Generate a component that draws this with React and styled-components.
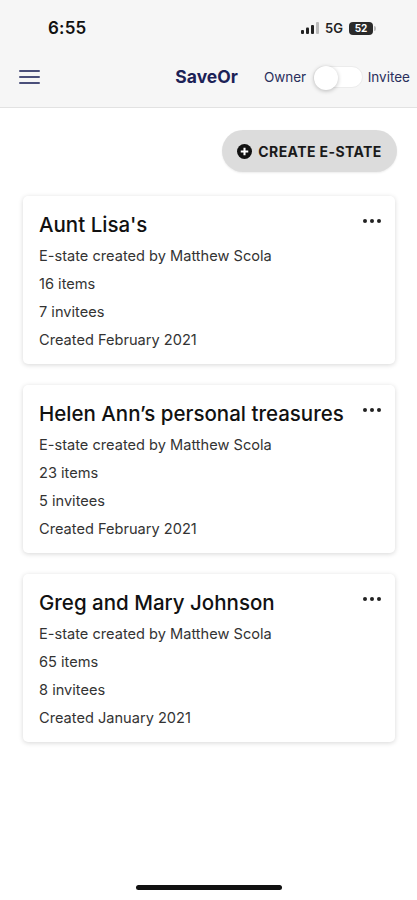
import React from 'react';
import styled, { createGlobalStyle } from 'styled-components';

const GlobalStyle = createGlobalStyle`
	html, body {
		margin: 0;
		padding: 0;
		background: #ffffff;
	}
	body {
		font-family: Inter, "Liberation Sans", Arial, sans-serif;
	}
`;

const Screen = styled.div`
	width: 417px;
	height: 900px;
	display: flex;
	flex-direction: column;
	background: #ffffff;
	position: relative;
	overflow: hidden;
`;

const Top = styled.div`
	background: #f6f6f6;
	border-bottom: 1px solid #e2e2e2;
	height: 108px;
	box-sizing: border-box;
`;

const StatusBar = styled.div`
	height: 56px;
	display: flex;
	align-items: center;
	justify-content: space-between;
	padding: 0 44px 0 48px;
	box-sizing: border-box;
`;

const Time = styled.span`
	font-size: 17px;
	font-weight: 600;
	color: #111;
	letter-spacing: 0.2px;
`;

const StatusRight = styled.div`
	display: flex;
	align-items: center;
	gap: 6px;
	font-size: 13px;
	font-weight: 600;
	color: #222;
`;

const Battery = styled.span`
	display: inline-flex;
	align-items: center;
	justify-content: center;
	width: 24px;
	height: 13px;
	border-radius: 4px;
	background: #2a2a2a;
	color: #fff;
	font-size: 10px;
	font-weight: 700;
	position: relative;
	&::after {
		content: '';
		position: absolute;
		right: -3px;
		top: 4px;
		width: 2px;
		height: 5px;
		border-radius: 0 2px 2px 0;
		background: #bbb;
	}
`;

const NavBar = styled.div`
	height: 41px;
	display: flex;
	align-items: center;
	padding: 0 7px 0 19px;
`;

const Menu = styled.div`
	width: 22px;
	display: flex;
	flex-direction: column;
	gap: 4px;
	& > span {
		height: 2px;
		background: #4a4f7a;
		border-radius: 1px;
	}
`;

const Brand = styled.div`
	margin-left: 135px;
	font-size: 17.5px;
	font-weight: 700;
	color: #1c2257;
`;

const ModeLabel = styled.span`
	font-size: 13.5px;
	color: #2a2f5c;
	margin: ${p => p.$left ? '0 7px 0 26px' : '0 0 0 5px'};
`;

const Toggle = styled.div`
	width: 51px;
	height: 22px;
	border-radius: 11px;
	background: #ffffff;
	border: 1px solid #ececec;
	box-sizing: border-box;
	position: relative;
`;

const Knob = styled.div`
	position: absolute;
	left: 0px;
	top: -1px;
	width: 24px;
	height: 24px;
	border-radius: 50%;
	background: #fff;
	box-shadow: 0 1px 4px rgba(0,0,0,0.25);
`;

const Content = styled.div`
	display: flex;
	flex-direction: column;
	padding: 22px 22px 0 23px;
`;

const CreateButton = styled.button`
	align-self: flex-end;
	display: flex;
	align-items: center;
	gap: 6px;
	height: 42px;
	margin-right: -2px;
	width: 175px;
	padding: 0;
	justify-content: center;
	border: none;
	border-radius: 21px;
	background: #dcdcdc;
	font-family: inherit;
	font-size: 14px;
	font-weight: 700;
	letter-spacing: 0.4px;
	color: #1a1a1a;
	box-shadow: 0 1px 2px rgba(0,0,0,0.08);
`;

const PlusIcon = () => (
	<svg width="15" height="15" viewBox="0 0 16 16">
		<circle cx="8" cy="8" r="8" fill="#111" />
		<path d="M8 4v8M4 8h8" stroke="#fff" strokeWidth="2.2" />
	</svg>
);

const CardList = styled.div`
	display: flex;
	flex-direction: column;
	gap: 21px;
	margin-top: 24px;
`;

const Card = styled.div`
	height: 168px;
	box-sizing: border-box;
	background: #fff;
	border-radius: 5px;
	box-shadow: 0 1px 5px rgba(0,0,0,0.16);
	padding: 16px 14px 0 16px;
	display: flex;
	flex-direction: column;
`;

const TitleRow = styled.div`
	display: flex;
	justify-content: space-between;
	align-items: flex-start;
`;

const Title = styled.div`
	font-size: 20.5px;
	font-weight: 500;
	color: #111;
	line-height: 26px;
`;

const Dots = styled.div`
	display: flex;
	gap: 3px;
	margin-top: 7px;
	& > span {
		width: 4px;
		height: 4px;
		border-radius: 50%;
		background: #222;
	}
`;

const Line = styled.div`
	font-size: 14.6px;
	color: #333;
	line-height: 28px;
`;

const Details = styled.div`
	margin-top: 4px;
`;

const HomeBar = styled.div`
	position: absolute;
	left: 136px;
	bottom: 10px;
	width: 146px;
	height: 5px;
	border-radius: 3px;
	background: #111;
`;

const estates = [
	{ title: "Aunt Lisa's", items: 16, invitees: 7, created: 'February 2021' },
	{ title: 'Helen Ann\u2019s personal treasures', items: 23, invitees: 5, created: 'February 2021' },
	{ title: 'Greg and Mary Johnson', items: 65, invitees: 8, created: 'January 2021' },
];

const App = () => (
	<Screen>
		<GlobalStyle />
		<Top>
			<StatusBar>
				<Time>6:55</Time>
				<StatusRight>
					<svg width="18" height="12" viewBox="0 0 18 12">
						<rect x="0" y="8" width="3" height="4" rx="1" fill="#222" />
						<rect x="5" y="5.5" width="3" height="6.5" rx="1" fill="#222" />
						<rect x="10" y="3" width="3" height="9" rx="1" fill="#222" />
						<rect x="15" y="0" width="3" height="12" rx="1" fill="#bbb" />
					</svg>
					<span>5G</span>
					<Battery>52</Battery>
				</StatusRight>
			</StatusBar>
			<NavBar>
				<Menu><span /><span /><span /></Menu>
				<Brand>SaveOr</Brand>
				<ModeLabel $left>Owner</ModeLabel>
				<Toggle><Knob /></Toggle>
				<ModeLabel>Invitee</ModeLabel>
			</NavBar>
		</Top>
		<Content>
			<CreateButton><PlusIcon />CREATE E-STATE</CreateButton>
			<CardList>
				{estates.map(e => (
					<Card key={e.title}>
						<TitleRow>
							<Title>{e.title}</Title>
							<Dots><span /><span /><span /></Dots>
						</TitleRow>
						<Details>
							<Line>E-state created by Matthew Scola</Line>
							<Line>{e.items} items</Line>
							<Line>{e.invitees} invitees</Line>
							<Line>Created {e.created}</Line>
						</Details>
					</Card>
				))}
			</CardList>
		</Content>
		<HomeBar />
	</Screen>
);

export default App;
